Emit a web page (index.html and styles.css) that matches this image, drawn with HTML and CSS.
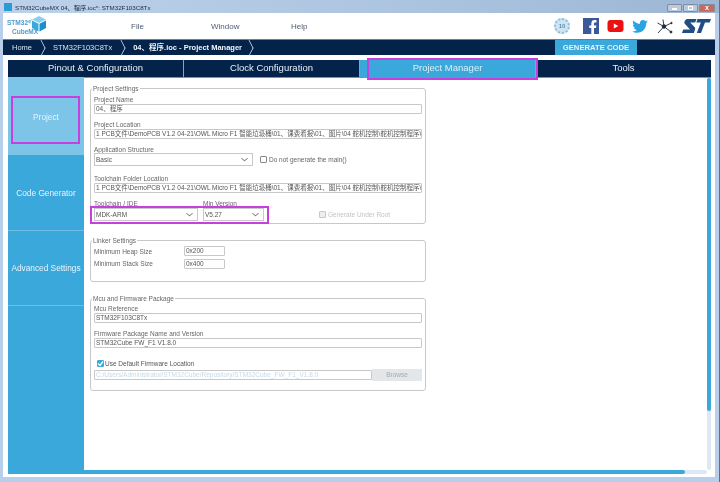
FILE: index.html
```html
<!DOCTYPE html>
<html lang="en">
	<head>
		<meta charset="UTF-8" />
		<title>STM32CubeMX</title>
		<link rel="stylesheet" href="styles.css">
	</head>
	<body>
		<div class="window">
			<div class="titlebar">
				<div class="app-icon"></div>
				<span class="title-text">STM32CubeMX 04、程序.ioc*: STM32F103C8Tx</span>
				<div class="win-buttons">
					<div class="win-btn"><span class="glyph-min"></span></div>
					<div class="win-btn"><span class="glyph-max"></span></div>
					<div class="win-btn win-close"><span class="glyph-x">x</span></div>
				</div>
			</div>
			<div class="client">
				<div class="menubar">
					<div class="logo">
						<div class="logo-text">
							<span class="logo-stm">STM32</span>
							<span class="logo-cube">CubeMX</span>
						</div>
						<svg class="logo-svg" width="22" height="16" viewBox="0 0 22 16">
							<path d="M0 6 L7 3 L5 8 L3.500 6.500 Z" fill="#8cc9e8"/>
							<path d="M14 0 L21 3.500 L14 7 L7 3.500 Z" fill="#8ad0f0"/>
							<path d="M7 4.500 L13.500 7.800 L13.500 15.500 L7 12 Z" fill="#3aa8da"/>
							<path d="M21 4.500 L14.500 7.800 L14.500 15.500 L21 12 Z" fill="#1b8fc9"/>
						</svg>
					</div>
					<div class="menu-items">
						<span class="menu-item">File</span>
						<span class="menu-item">Window</span>
						<span class="menu-item">Help</span>
					</div>
					<div class="social">
						<div class="badge">10</div>
						<svg class="fb" width="16" height="16" viewBox="0 0 16 16">
							<rect width="16" height="16" fill="#3b5998"/>
							<path d="M11 16 V10 H13 L13.400 7.400 H11 V5.800 C11 5 11.300 4.500 12.300 4.500 H13.500 V2.200 C13 2.100 12.300 2 11.500 2 C9.600 2 8.300 3.200 8.300 5.400 V7.400 H6.300 V10 H8.300 V16 Z" fill="#fff"/>
						</svg>
						<svg class="yt" width="17" height="12" viewBox="0 0 16 12">
							<rect width="16" height="12" rx="3" fill="#ee0f10"/>
							<path d="M6.300 3.400 L10.800 6 L6.300 8.600 Z" fill="#fff"/>
						</svg>
						<svg class="tw" width="16" height="13" viewBox="0 0 24 20">
							<path d="M24 2.400 C23.100 2.800 22.200 3 21.200 3.200 C22.200 2.500 23 1.600 23.400 .4 C22.400 1 21.400 1.400 20.200 1.600 C19.300 .6 18 0 16.600 0 C13.400 0 11.100 3 11.800 6 C7.700 5.800 4.100 3.900 1.700 .9 C.4 3.100 1 6 3.200 7.500 C2.400 7.500 1.600 7.200 .9 6.900 C.9 9.200 2.500 11.400 4.900 11.900 C4.200 12.100 3.400 12.100 2.700 12 C3.300 14 5.200 15.400 7.300 15.400 C5.200 17.100 2.600 17.800 0 17.500 C2.200 18.900 4.800 19.700 7.500 19.700 C16.600 19.700 21.800 12 21.500 5 C22.500 4.300 23.300 3.400 24 2.400 Z" fill="#2ba3e3"/>
						</svg>
						<svg class="net" width="17" height="17" viewBox="0 0 17 17">
							<g stroke="#1d2b3e" stroke-width=".9" fill="#1d2b3e">
								<line x1="8" y1="8.500" x2="7" y2="1.500"/>
								<line x1="8" y1="8.500" x2="15.500" y2="5"/>
								<line x1="8" y1="8.500" x2="15" y2="14"/>
								<line x1="8" y1="8.500" x2="2" y2="15"/>
								<line x1="8" y1="8.500" x2="1.500" y2="5"/>
								<circle cx="8" cy="8.500" r="1.800"/>
								<circle cx="15" cy="14" r="1"/>
								<circle cx="15.500" cy="5" r=".7"/>
							</g>
						</svg>
						<svg class="st" width="29" height="14" viewBox="0 0 29 14">
							<path d="M6 0 H14.500 L13.200 3.500 H8.200 L12.500 8 C13.500 9.200 13.300 10 12.800 11.200 L11.800 14 H0 L1.200 10.500 H8 L3 5 C2 4 2.300 3 2.800 2 C3.500 .6 4.500 0 6 0 Z" fill="#1f4f82"/>
							<path d="M15.500 0 H29 L27.700 3.500 H23 L19 14 H14.800 L18.800 3.500 H14.300 Z" fill="#1f4f82"/>
						</svg>
					</div>
				</div>
				<div class="navbar">
					<div class="crumb crumb-home">Home</div>
					<div class="crumb">STM32F103C8Tx</div>
					<div class="crumb crumb-bold">04、程序.ioc - Project Manager</div>
					<button class="generate">GENERATE CODE</button>
				</div>
				<div class="tabs">
					<div class="tab">Pinout &amp; Configuration</div>
					<div class="tab">Clock Configuration</div>
					<div class="tab tab-active">Project Manager</div>
					<div class="tab">Tools</div>
				</div>
				<div class="main">
					<div class="sidebar">
						<div class="side-item side-active">Project</div>
						<div class="side-item">Code Generator</div>
						<div class="side-item">Advanced Settings</div>
					</div>
					<div class="panel">
						<div class="forms">
							<fieldset class="group group-project">
								<legend>Project Settings</legend>
								<label>Project Name</label>
								<div class="input">04、程序</div>
								<label>Project Location</label>
								<div class="input">1 PCB文件\DemoPCB V1.2 04-21\OWL Micro F1 智能垃圾桶\01、课费看报\01、图片\04 舵机控制\舵机控制程序\</div>
								<label>Application Structure</label>
								<div class="row row-app">
									<div class="select select-wide">Basic<span class="chev"></span></div>
									<div class="check"><span class="box"></span>Do not generate the main()</div>
								</div>
								<label class="label-gap">Toolchain Folder Location</label>
								<div class="input">1 PCB文件\DemoPCB V1.2 04-21\OWL Micro F1 智能垃圾桶\01、课费看报\01、图片\04 舵机控制\舵机控制程序\</div>
								<div class="row row-tool">
									<div class="col col-tool">
										<label>Toolchain / IDE</label>
										<div class="select">MDK-ARM<span class="chev"></span></div>
									</div>
									<div class="col col-ver">
										<label>Min Version</label>
										<div class="select">V5.27<span class="chev"></span></div>
									</div>
									<div class="check check-off"><span class="box"></span>Generate Under Root</div>
								</div>
							</fieldset>
							<fieldset class="group group-linker">
								<legend>Linker Settings</legend>
								<div class="row-linker"><span>Minimum Heap Size</span><div class="input input-small">0x200</div></div>
								<div class="row-linker"><span>Minimum Stack Size</span><div class="input input-small">0x400</div></div>
							</fieldset>
							<fieldset class="group group-mcu">
								<legend>Mcu and Firmware Package</legend>
								<label>Mcu Reference</label>
								<div class="input">STM32F103C8Tx</div>
								<label>Firmware Package Name and Version</label>
								<div class="input">STM32Cube FW_F1 V1.8.0</div>
								<div class="check check-on"><span class="box box-on"><svg width="7" height="7" viewBox="0 0 7 7"><path d="M1 3.500 L3 5.500 L6 1.500" fill="none" stroke="#fff" stroke-width="1.300"/></svg></span>Use Default Firmware Location</div>
								<div class="row row-browse">
									<div class="input input-disabled">C:/Users/Administrator/STM32Cube/Repository/STM32Cube_FW_F1_V1.8.0</div>
									<div class="browse">Browse</div>
								</div>
							</fieldset>
						</div>
						<div class="vscroll"><div class="vthumb"></div></div>
					</div>
				</div>
				<div class="hscroll"><div class="hthumb"></div></div>
			</div>
		</div>
		<!-- magenta marks drawn over the screenshot -->
		<div class="mark mark-tab"></div>
		<div class="mark mark-side"></div>
		<div class="mark mark-tool"></div>
	</body>
</html>
```

FILE: styles.css
```css
* {
	box-sizing: border-box;
}
html, body {
	margin: 0;
	padding: 0;
	width: 720px;
	height: 482px;
	overflow: hidden;
}
body {
	position: relative;
	font-family: "Liberation Sans", "Noto Sans CJK SC", sans-serif;
	color: #555;
}
.window {
	width: 720px;
	height: 482px;
	display: flex;
	flex-direction: column;
	padding: 0 2px 0 3px;
	background: #b7cfea;
	border-right: 1px solid #5a7288;
	filter: blur(0.35px);
}
.titlebar {
	height: 13px;
	flex: none;
	margin: 0 -2px 0 -3px;
	padding: 0 4px 0 4px;
	display: flex;
	align-items: center;
	background: linear-gradient(90deg, #bdd2ea, #aac3df 60%, #9db6d4);
}
.app-icon {
	width: 8px;
	height: 8px;
	background: #2d9bd3;
	margin-right: 3px;
	margin-top: 1px;
}
.title-text {
	font-size: 6.200px;
	color: #1b2a3a;
	margin-top: 2px;
}
.win-buttons {
	margin-left: auto;
	display: flex;
	gap: 1px;
	margin-top: 3px;
	height: 8px;
}
.win-btn {
	width: 15px;
	height: 8px;
	border: 1px solid #7f8fa3;
	border-radius: 1px;
	background: #bccadb;
	display: flex;
	align-items: center;
	justify-content: center;
}
.win-close {
	width: 16px;
	background: #c9685c;
}
.glyph-min {
	width: 5px;
	height: 2px;
	background: #fff;
	margin-top: 2px;
}
.glyph-max {
	width: 5px;
	height: 4px;
	border: 1px solid #fff;
}
.glyph-x {
	color: #fff;
	font-size: 7px;
	font-weight: bold;
	line-height: 6px;
}
.client {
	flex: 1;
	display: flex;
	flex-direction: column;
	background: #fff;
	margin-bottom: 5px;
	margin-right: 2px;
	padding-bottom: 3px;
}
.menubar {
	height: 26px;
	flex: none;
	display: flex;
	align-items: center;
	padding-left: 4px;
}
.logo {
	width: 42px;
	height: 26px;
	flex: none;
	position: relative;
}
.logo-text {
	display: flex;
	flex-direction: column;
	align-items: flex-start;
	padding-top: 5px;
	font-size: 7.500px;
	font-weight: bold;
	line-height: 9px;
	color: #4f9acd;
}
.logo-stm {
	transform: scaleX(.87);
	transform-origin: left;
}
.logo-cube {
	margin-left: 5px;
	transform: scaleX(.87);
	transform-origin: left;
}
.logo-svg {
	position: absolute;
	left: 18px;
	top: 3px;
}
.menu-items {
	display: flex;
	font-size: 8px;
	color: #4d5d72;
}
.menu-item {
	width: 80px;
}
.menu-items .menu-item:first-child {
	margin-left: 82px;
}
.social {
	margin-left: auto;
	display: flex;
	align-items: center;
	padding-right: 4px;
}
.badge {
	width: 16px;
	height: 16px;
	border-radius: 50%;
	background: #cfe3f2;
	border: 2px dotted #8fbcd9;
	color: #5b8fb5;
	font-size: 6px;
	font-weight: bold;
	text-align: center;
	line-height: 12px;
	margin-right: 13px;
}
.fb {
	margin-right: 8px;
}
.yt {
	margin-right: 8px;
}
.tw {
	margin-right: 8px;
}
.net {
	margin-right: 9px;
}
.navbar {
	height: 16px;
	flex: none;
	background: #03234b;
	border-top: 1px solid #6b7f98;
	display: flex;
	align-items: center;
	font-size: 7.500px;
	color: #d7e3ee;
}
.crumb {
	position: relative;
	padding-left: 8px;
	padding-right: 13px;
	height: 15px;
	line-height: 15px;
	white-space: nowrap;
}
.crumb::after {
	content: "";
	position: absolute;
	right: -1.500px;
	top: 2px;
	width: 11px;
	height: 11px;
	border-top: 1px solid #e4edf5;
	border-right: 1px solid #e4edf5;
	transform: scaleX(.52) rotate(45deg);
}
.crumb-home {
	padding-left: 9px;
}
.crumb-bold {
	font-weight: bold;
	color: #f0f5fa;
	padding-right: 12px;
}
.generate {
	margin-left: auto;
	margin-right: 78px;
	width: 82px;
	height: 15px;
	border: none;
	padding: 0;
	background: #3aa8db;
	color: #e6f3fa;
	font-family: "Liberation Sans", sans-serif;
	font-size: 7.700px;
	font-weight: bold;
}
.tabs {
	flex: none;
	display: flex;
	margin: 5px 4px 0 5px;
	height: 17px;
	font-size: 9.500px;
	color: #e8eff6;
}
.tab {
	width: 176px;
	background: #03234b;
	border-right: 1px solid #8ea3ba;
	text-align: center;
	line-height: 16px;
}
.tabs .tab:last-child {
	border-right: none;
	flex: 1;
}
.tab-active {
	background: #3aa8db;
	color: #dceef8;
}
.main {
	flex: 1;
	min-height: 0;
	display: flex;
	margin-left: 5px;
	margin-right: 4px;
}
.sidebar {
	width: 76px;
	flex: none;
	background: #3aa8db;
	font-size: 8.300px;
	color: #e8f4fb;
}
.side-item {
	height: 75.500px;
	display: flex;
	align-items: center;
	justify-content: center;
	border-bottom: 1px solid #6dbde3;
	white-space: nowrap;
	padding-top: 1px;
}
.side-active {
	height: 78px;
	background: #7cc4e8;
	border-bottom: none;
}
.panel {
	flex: 1;
	min-width: 0;
	display: flex;
	justify-content: space-between;
	background: #fff;
	border-top: 1px solid #3aa8db;
}
.forms {
	width: 342px;
	padding: 6px 0 0 6px;
	display: flex;
	flex-direction: column;
}
.group {
	margin: 0 0 12px 0;
	width: 336px;
	border: 1px solid #c6c8ca;
	border-radius: 3px;
	padding: 2px 3px 0 3px;
	font-size: 6.500px;
	color: #555;
	flex: none;
}
.group legend {
	padding: 0 1px;
	margin-left: -2px;
	line-height: 9px;
	color: #666;
	font-size: 6.500px;
}
.group-project {
	height: 140px;
}
.group-linker {
	height: 46px;
	padding-top: 0;
}
.group-mcu {
	height: 97px;
	padding-top: 1px;
}
.group label {
	display: block;
	line-height: 9px;
	color: #666;
}
.input {
	height: 10px;
	border: 1px solid #c6c8ca;
	border-radius: 1px;
	line-height: 8px;
	padding-left: 1px;
	margin-bottom: 6px;
	white-space: nowrap;
	overflow: hidden;
	color: #555;
	font-size: 6.500px;
	background: #fff;
}
.row {
	display: flex;
	align-items: center;
}
.row-app {
	margin-top: -1px;
}
.select {
	position: relative;
	height: 13px;
	border: 1px solid #c6c8ca;
	line-height: 11px;
	padding-left: 1px;
	color: #555;
	background: #fff;
}
.select-wide {
	width: 159px;
}
.chev {
	position: absolute;
	right: 5px;
	top: 2px;
	width: 5px;
	height: 5px;
	border-right: 1px solid #777;
	border-bottom: 1px solid #777;
	transform: scaleY(.8) rotate(45deg);
}
.check {
	display: flex;
	align-items: center;
	color: #666;
	margin-left: 7px;
	white-space: nowrap;
}
.box {
	width: 7px;
	height: 7px;
	border: 1px solid #8a8a8a;
	border-radius: 1px;
	margin-right: 2px;
	flex: none;
}
.group .label-gap {
	margin-top: 8px;
}
.row-tool {
	align-items: flex-end;
}
.col-tool {
	width: 104px;
	flex: none;
}
.col-ver {
	width: 61px;
	margin-left: 5px;
	flex: none;
}
.check-off {
	margin-left: 55px;
	margin-bottom: 3px;
	color: #c0c3c6;
}
.check-off .box {
	border-color: #c6c8ca;
	background: #eee;
}
.row-linker {
	display: flex;
	align-items: center;
	height: 12.500px;
	color: #666;
}
.row-linker span {
	width: 90px;
}
.input-small {
	width: 41px;
	margin-bottom: 0;
}
.check-on {
	margin: 11px 0 2px 3px;
	color: #555;
	height: 8px;
}
.check-on .box {
	margin-right: 1px;
}
.box-on {
	background: #3aa8db;
	border-color: #3aa8db;
	display: flex;
	align-items: center;
	justify-content: center;
}
.box-on svg {
	flex: none;
}
.row-browse {
	align-items: center;
}
.input-disabled {
	flex: 1;
	color: #c5d9e8;
	margin: 0;
}
.browse {
	width: 50px;
	height: 12px;
	background: #e4e7ea;
	color: #a4a9ae;
	text-align: center;
	line-height: 12px;
}
.vscroll {
	width: 4px;
	flex: none;
	background: #dce8f3;
	border-radius: 2px;
}
.vthumb {
	height: 333px;
	background: #3aa8db;
	border-radius: 2px;
}
.hscroll {
	height: 4px;
	flex: none;
	margin: 0 8px 0 5px;
	background: #dce8f3;
	border-radius: 0 2px 2px 0;
}
.hthumb {
	width: 677px;
	height: 4px;
	background: #3aa8db;
	border-radius: 0 2px 2px 0;
}
.mark {
	position: absolute;
	border: 2px solid #c73fdc;
}
.mark-tab {
	left: 367px;
	top: 58px;
	width: 171px;
	height: 22px;
}
.mark-side {
	left: 11px;
	top: 96px;
	width: 69px;
	height: 48px;
}
.mark-tool {
	left: 90px;
	top: 206px;
	width: 179px;
	height: 18px;
}
```
